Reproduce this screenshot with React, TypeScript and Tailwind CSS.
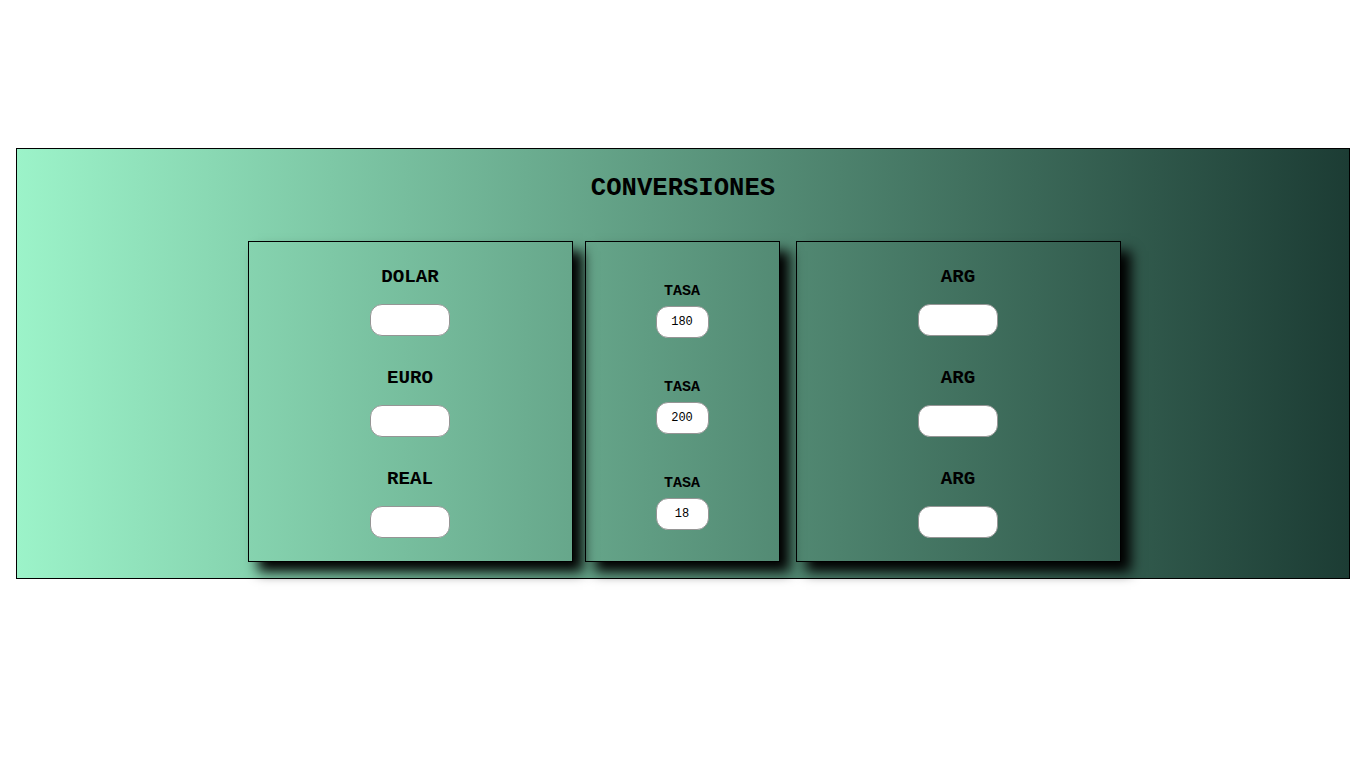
const mono = "font-['Liberation_Mono','Courier_New',monospace]";

function Field({ label }: { label: string }) {
  return (
    <div className="flex flex-col items-center">
      <h3 className={`${mono} text-[19.2px] font-bold leading-[20px] text-black`}>{label}</h3>
      <input
        type="text"
        className="mt-[17px] h-[32px] w-[80px] rounded-[12px] border border-[#959595] bg-white outline-none"
      />
    </div>
  );
}

function Rate({ value }: { value: string }) {
  return (
    <div className="flex flex-col items-center">
      <h4 className={`${mono} text-[15px] font-bold leading-[16px] text-black`}>TASA</h4>
      <input
        type="text"
        defaultValue={value}
        className={`${mono} mt-[6px] h-[32px] w-[53px] rounded-[12px] border border-[#959595] bg-white text-center text-[12px] text-black outline-none`}
      />
    </div>
  );
}

export default function App() {
  const box = "border border-black shadow-[10px_10px_12px_#000] h-[321px]";
  return (
    <div className="min-h-[768px] bg-white pt-[148px]">
      <div className="mx-[16px] border border-black bg-[linear-gradient(to_right,#9cf3c9,#1c3c34)] pb-[16px] pt-[25px]">
        <h1 className={`${mono} text-center text-[25.6px] font-bold leading-[30px] text-black`}>
          CONVERSIONES
        </h1>
        <div className="mt-[37px] flex justify-center pl-[2px]">
          <div className={`${box} flex w-[325px] flex-col items-center gap-[32px] pt-[25px]`}>
            <Field label="DOLAR" />
            <Field label="EURO" />
            <Field label="REAL" />
          </div>
          <div className={`${box} ml-[12px] flex w-[195px] flex-col items-center gap-[42px] pt-[42px]`}>
            <Rate value="180" />
            <Rate value="200" />
            <Rate value="18" />
          </div>
          <div className={`${box} ml-[16px] flex w-[325px] flex-col items-center gap-[32px] pt-[25px]`}>
            <Field label="ARG" />
            <Field label="ARG" />
            <Field label="ARG" />
          </div>
        </div>
      </div>
    </div>
  );
}
